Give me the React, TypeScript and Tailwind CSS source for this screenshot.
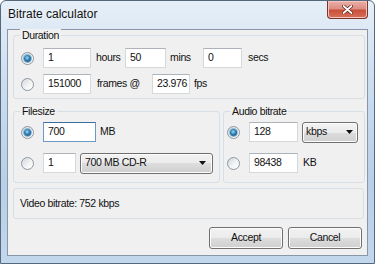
import React from 'react';

function Radio({ checked }: { checked?: boolean }) {
  return (
    <span className="flex h-[13px] w-[13px] shrink-0 items-center justify-center rounded-full border border-[#8d98a2] bg-[linear-gradient(135deg,#d3d7db,#f4f5f6_60%,#ffffff)]">
      {checked && (
        <span className="h-[7px] w-[7px] rounded-full bg-[radial-gradient(circle_at_45%_40%,#9fdcf7,#2d7db3_45%,#0b3c61)] shadow-[0_0_0_1px_#8fb8d6]" />
      )}
    </span>
  );
}

function Field({ value, className, focus }: { value: string; className: string; focus?: boolean }) {
  return (
    <div
      className={`flex h-[20px] shrink-0 items-center bg-white pl-[4px] border ${
        focus ? 'border-[#6f98c4] border-t-[#3d6d9e]' : 'border-[#d4d9de] border-t-[#aeb3b9]'
      } ${className}`}
    >
      {value}
    </div>
  );
}

function Arrow() {
  return (
    <svg width="7" height="4" viewBox="0 0 7 4" className="shrink-0">
      <path d="M0 0h7L3.5 4z" fill="#111" />
    </svg>
  );
}

function Combo({ label, className }: { label: string; className: string }) {
  return (
    <div
      className={`flex h-[21px] shrink-0 items-center justify-between rounded-[3px] border border-[#707070] bg-[linear-gradient(#f3f3f3,#ebebeb_50%,#dddddd_50%,#cfcfcf)] shadow-[inset_0_0_0_1px_#fcfcfc] ${className}`}
    >
      <span>{label}</span>
      <Arrow />
    </div>
  );
}

function Group({ title, className, children }: { title: string; className: string; children: React.ReactNode }) {
  return (
    <div className={`relative shrink-0 rounded-[3px] border border-[#d5dfe5] ${className}`}>
      <span className="absolute left-[6px] top-[-7px] bg-[#f0f0f0] px-[2px] leading-[12px]">{title}</span>
      {children}
    </div>
  );
}

function Button({ label }: { label: string }) {
  return (
    <div className="flex h-[22px] w-[74px] items-center justify-center rounded-[3px] border border-[#707070] bg-[linear-gradient(#f2f2f2,#ebebeb_50%,#dddddd_50%,#cfcfcf)] shadow-[inset_0_0_0_1px_#fcfcfc]">
      {label}
    </div>
  );
}

export default function App() {
  return (
    <div className="flex h-[264px] w-[375px] flex-col overflow-hidden rounded-t-[6px] border border-[#55697d] bg-[linear-gradient(180deg,#e6eff8,#cddef0_30%,#b8cfe7_70%,#c3d7ec)] font-['Liberation_Sans',Arial,sans-serif] text-[10.5px] tracking-[-0.35px] text-[#111]">
      {/* title bar */}
      <div className="flex h-[28px] shrink-0 items-start justify-between pl-[7px] pr-[6px]">
        <span className="pt-[6px] text-[12px] leading-[14px] tracking-normal [text-shadow:0_0_6px_#ffffff]">
          Bitrate calculator
        </span>
        <div className="flex h-[18px] w-[41px] items-center justify-center rounded-b-[4px] border border-t-0 border-[#7a3329] bg-[linear-gradient(#eab0a8,#dc8e83_45%,#c9503b_55%,#d87158)] shadow-[inset_0_0_0_1px_#f2c6be]">
          <svg width="11" height="9" viewBox="0 0 11 9">
            <path d="M1.5 1l8 7M9.5 1l-8 7" stroke="#5a1c14" strokeWidth="3.2" strokeLinecap="round" />
            <path d="M1.5 1l8 7M9.5 1l-8 7" stroke="#ffffff" strokeWidth="1.8" strokeLinecap="round" />
          </svg>
        </div>
      </div>

      {/* client */}
      <div className="mx-[6px] mb-[7px] flex flex-1 flex-col border border-[#8797a8] bg-[#f0f0f0] pl-[5px] pr-[2px] pt-[5px]">
        <Group title="Duration" className="h-[64px] w-[352px] pl-[7px] pt-[12px]">
          <div className="flex h-[20px] items-center">
            <Radio checked />
            <Field value="1" className="ml-[9px] w-[48px]" />
            <span className="ml-[5px] w-[29px]">hours</span>
            <Field value="50" className="w-[41px]" />
            <span className="ml-[4px] w-[33px]">mins</span>
            <Field value="0" className="w-[39px]" />
            <span className="ml-[6px]">secs</span>
          </div>
          <div className="mt-[6px] flex h-[20px] items-center">
            <Radio />
            <Field value="151000" className="ml-[9px] w-[48px]" />
            <span className="ml-[6px] w-[55px]">frames @</span>
            <Field value="23.976" className="w-[38px]" />
            <span className="ml-[4px]">fps</span>
          </div>
        </Group>

        <div className="mt-[12px] flex gap-[3px]">
          <Group title="Filesize" className="h-[72px] w-[207px] pl-[7px] pt-[10px]">
            <div className="flex h-[20px] items-center">
              <Radio checked />
              <Field value="700" focus className="ml-[9px] w-[53px]" />
              <span className="ml-[4px]">MB</span>
            </div>
            <div className="mt-[11px] flex h-[20px] items-center">
              <Radio />
              <Field value="1" className="ml-[9px] w-[33px]" />
              <Combo label="700 MB CD-R" className="ml-[4px] w-[133px] pl-[4px] pr-[6px]" />
            </div>
          </Group>
          <Group title="Audio bitrate" className="h-[72px] w-[142px] pl-[3px] pt-[10px]">
            <div className="flex h-[20px] items-center">
              <Radio checked />
              <Field value="128" className="ml-[9px] w-[49px]" />
              <Combo label="kbps" className="ml-[4px] w-[56px] pl-[3px] pr-[4px]" />
            </div>
            <div className="mt-[11px] flex h-[20px] items-center">
              <Radio />
              <Field value="98438" className="ml-[9px] w-[49px]" />
              <span className="ml-[5px]">KB</span>
            </div>
          </Group>
        </div>

        <div className="mt-[5px] flex h-[31px] w-[351px] items-center rounded-[3px] border border-[#d5dfe5] pl-[6px]">
          Video bitrate: 752 kbps
        </div>

        <div className="mr-[3px] mt-[8px] flex justify-end gap-[5px]">
          <Button label="Accept" />
          <Button label="Cancel" />
        </div>
      </div>
    </div>
  );
}
